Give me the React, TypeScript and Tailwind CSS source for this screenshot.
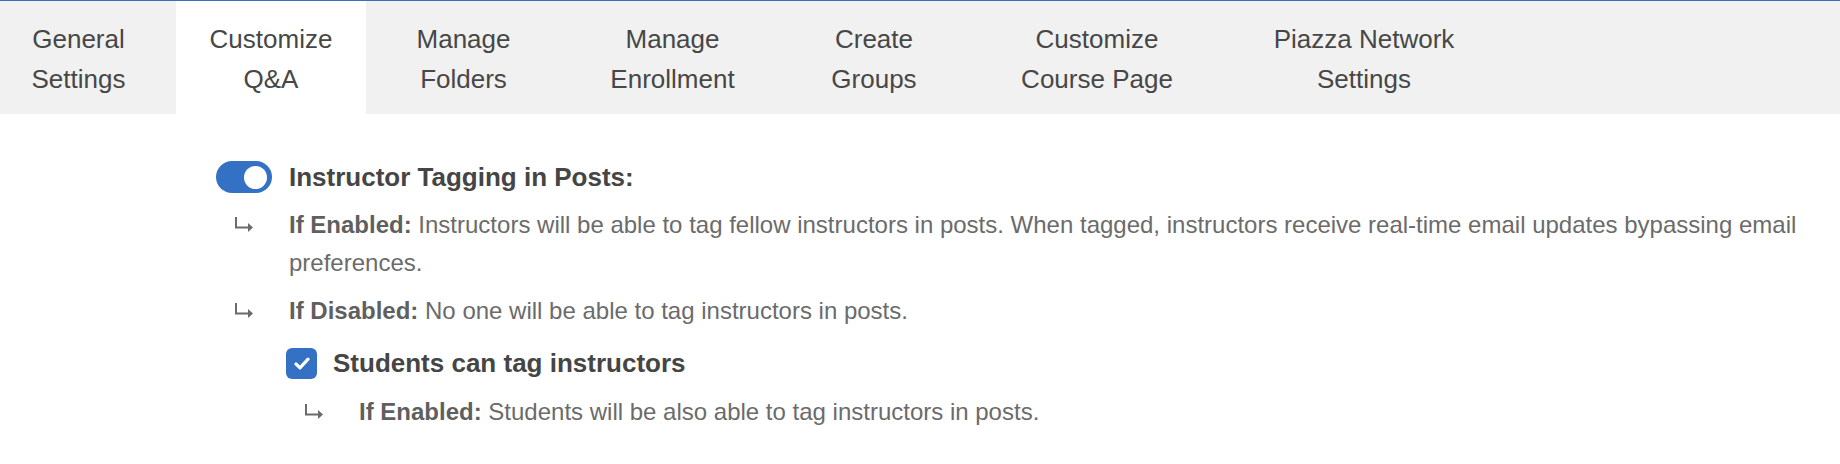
import React from 'react';

const tabs = [
  { top: 'General', bottom: 'Settings', w: 'w-[157px]' },
  { top: 'Customize', bottom: 'Q&A', w: 'w-[190px] ml-[19px]', active: true },
  { top: 'Manage', bottom: 'Folders', w: 'w-[195px]' },
  { top: 'Manage', bottom: 'Enrollment', w: 'w-[223px]' },
  { top: 'Create', bottom: 'Groups', w: 'w-[180px]' },
  { top: 'Customize', bottom: 'Course Page', w: 'w-[266px]' },
  { top: 'Piazza Network', bottom: 'Settings', w: 'w-[268px]' },
];

function Arrow() {
  return (
    <svg width="18" height="16" viewBox="0 0 18 16" className="shrink-0 block" aria-hidden>
      <path d="M1 0 V10.5 H14" fill="none" stroke="#6b6b6b" strokeWidth="2" />
      <path d="M13 6 L18 10.5 L13 15 Z" fill="#6b6b6b" />
    </svg>
  );
}

function Note({ label, text, indent }: { label: string; text: string; indent?: boolean }) {
  return (
    <div className={`flex ${indent ? 'pl-[89px]' : 'pl-[19px]'}`}>
      <div className="w-[54px] shrink-0 pt-[11px]">
        <Arrow />
      </div>
      <p className="text-[24px] leading-[38px] text-[#6b6b6b]">
        <span className="font-bold text-[#5f5f5f]">{label}</span> {text}
      </p>
    </div>
  );
}

export default function App() {
  return (
    <div className="w-[1840px] h-[464px] bg-white" style={{ fontFamily: '"Liberation Sans", Arial, sans-serif' }}>
      {/* Tabs */}
      <div className="h-[114px] bg-[#f1f1f1] border-t-[1.5px] border-[#3470c6] flex items-stretch">
        {tabs.map((t, i) => (
          <div
            key={i}
            className={`${t.w} shrink-0 pt-[18px] text-center text-[26px] leading-[40px] text-[#474747] ${t.active ? 'bg-white' : ''}`}
          >
            <div>{t.top}</div>
            <div>{t.bottom}</div>
          </div>
        ))}
      </div>

      {/* Content */}
      <div className="ml-[216px] pr-[10px] pt-[47px]">
        <div className="flex items-center gap-[17px] h-[32px]">
          <div className="w-[56px] h-[32px] rounded-full bg-[#3470c4] flex items-center justify-end pr-[5px] shrink-0">
            <div className="w-[23px] h-[23px] rounded-full bg-white" />
          </div>
          <span className="text-[26px] font-bold text-[#454545] leading-[32px]">Instructor Tagging in Posts:</span>
        </div>

        <div className="mt-[13px]">
          <Note
            label="If Enabled:"
            text="Instructors will be able to tag fellow instructors in posts. When tagged, instructors receive real-time email updates bypassing email preferences."
          />
        </div>
        <div className="mt-[10px]">
          <Note label="If Disabled:" text="No one will be able to tag instructors in posts." />
        </div>

        <div className="flex items-center gap-[16px] h-[31px] mt-[18px] pl-[70px]">
          <div className="w-[31px] h-[31px] rounded-[6px] bg-[#3470c4] flex items-center justify-center shrink-0">
            <svg width="16" height="13" viewBox="0 0 16 13" aria-hidden>
              <path d="M2 7 L6 10.8 L14 2.2" fill="none" stroke="white" strokeWidth="3.2" strokeLinecap="round" strokeLinejoin="round" />
            </svg>
          </div>
          <span className="text-[26px] font-bold text-[#454545] leading-[31px]">Students can tag instructors</span>
        </div>

        <div className="mt-[14px]">
          <Note indent label="If Enabled:" text="Students will be also able to tag instructors in posts." />
        </div>
      </div>
    </div>
  );
}
